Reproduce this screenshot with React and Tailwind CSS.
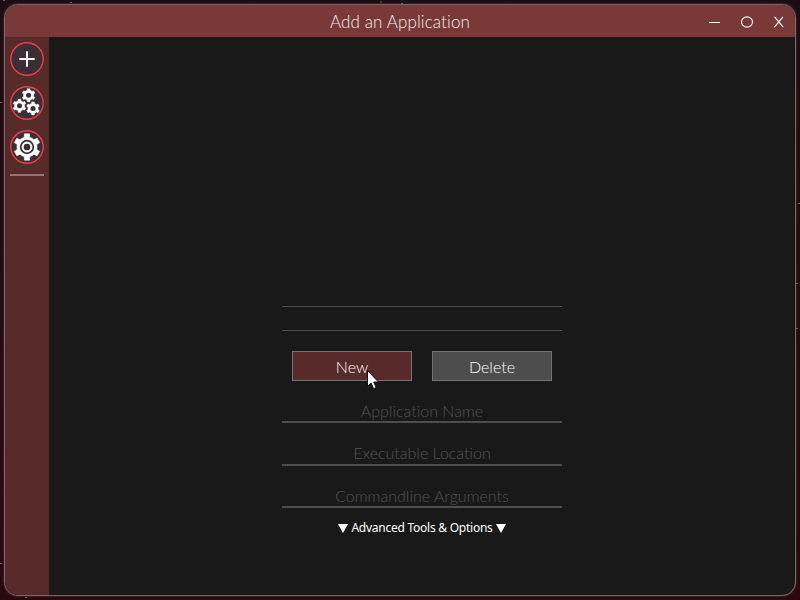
const LATO = "font-['Lato',sans-serif] font-light whitespace-nowrap [font-variant-ligatures:none]";

// Builds a closed outline with flat teeth around a centre point.
function gearPath(cx, cy, outer, inner, teeth) {
  const step = (Math.PI * 2) / teeth;
  const profile = [
    [-0.27, inner],
    [-0.18, outer],
    [0.18, outer],
    [0.27, inner],
    [0.5, inner],
  ];
  const points = [];
  for (let i = 0; i < teeth; i += 1) {
    for (const [offset, r] of profile) {
      const a = -Math.PI / 2 + (i + offset) * step;
      points.push(`${(cx + r * Math.cos(a)).toFixed(2)} ${(cy + r * Math.sin(a)).toFixed(2)}`);
    }
  }
  return `M${points.join("L")}Z`;
}

function Gear({ cx, cy, outer, inner, hole, teeth }) {
  return (
    <>
      <path d={gearPath(cx, cy, outer, inner, teeth)} fill="#fff" stroke="#fff" strokeWidth="0.6" strokeLinejoin="round" />
      <circle cx={cx} cy={cy} r={hole} fill="#3d2e35" />
    </>
  );
}

function RoundButton({ label, children }) {
  return (
    <button aria-label={label} className="size-[34px]">
      <svg viewBox="0 0 34 34" className="block size-[34px]">
        <circle cx="17" cy="17" r="16.2" fill="#3d2e35" stroke="#e84545" strokeWidth="1.4" />
        {children}
      </svg>
    </button>
  );
}

function Field({ label, className }) {
  return (
    <div className={`flex w-[280px] items-end justify-center border-b-2 border-[#4d4d4d] ${className}`}>
      <span className={`${LATO} text-[16px] leading-5 text-[#545454]`}>{label}</span>
    </div>
  );
}

export default function App() {
  return (
    <div className="relative h-[600px] w-[800px] overflow-hidden bg-[#260a0e] bg-linear-to-b from-[#1c0d10] to-[#2b080d] p-1">
      <svg className="absolute inset-0 h-full w-full" viewBox="0 0 800 600">
        <g fill="#7d565b">
          <rect x="3" y="0" width="2" height="1" />
          <rect x="70" y="2" width="2" height="1" />
          <rect x="380" y="1.5" width="2" height="1" />
          <rect x="401" y="3" width="2" height="1" />
          <rect x="798" y="203" width="2" height="1" />
          <rect x="796" y="283" width="2" height="1" />
          <rect x="796" y="328" width="2" height="1" />
          <rect x="0" y="102" width="2" height="1" />
          <rect x="0" y="563" width="2" height="1" />
          <rect x="25" y="597" width="2" height="1" />
        </g>
      </svg>
      <div className="relative flex h-[592px] w-[792px] flex-col overflow-hidden rounded-[14px] border border-[#75686a] bg-[#191919] shadow-[0_0_2px_#66565a]">
        <header className="flex h-8 shrink-0 items-center bg-[#793939] text-[#f3eeee]">
          <div className="w-[100px]" />
          <h1 className={`${LATO} flex-1 pt-0.5 text-center text-[17px] leading-6 tracking-[0.12px]`}>Add an Application</h1>
          <div className="flex w-[100px] items-center">
            <button aria-label="Minimize" className="ml-[14px] mt-[3px] h-px w-[11px] bg-white" />
            <button aria-label="Maximize" className="ml-[21px] mt-px h-3 w-[13px]">
              <svg viewBox="0 0 13 12" className="block h-3 w-[13px]">
                <ellipse cx="6" cy="6" rx="5.5" ry="5.1" fill="none" stroke="#fff" strokeWidth="1.1" />
              </svg>
            </button>
            <button aria-label="Close" className="ml-[19px] mt-px h-3 w-[11px]">
              <svg viewBox="0 0 11 12" className="block h-3 w-[11px]">
                <path d="M1.6 .8L10.2 11.2M10 .8L1.4 11.2" fill="none" stroke="#fff" strokeWidth="1.1" />
              </svg>
            </button>
          </div>
        </header>
        <div className="flex min-h-0 flex-1">
          <aside className="flex w-11 shrink-0 flex-col items-center gap-2.5 bg-[#582a2a] pt-[5px]">
            <RoundButton label="Add application">
              <path d="M17 9.3V24.7M9.3 17H24.7" stroke="#f4f4f4" strokeWidth="2" fill="none" />
            </RoundButton>
            <RoundButton label="Tools">
              <Gear cx={18.6} cy={9.2} outer={6.6} inner={5} hole={2.5} teeth={6} />
              <Gear cx={9.5} cy={19.8} outer={6.6} inner={5} hole={2.5} teeth={6} />
              <Gear cx={23} cy={22.4} outer={6.6} inner={5} hole={2.5} teeth={6} />
            </RoundButton>
            <RoundButton label="Settings">
              <Gear cx={17} cy={17} outer={13.4} inner={10} hole={7.2} teeth={6} />
              <circle cx="17" cy="17" r="4.4" fill="none" stroke="#fff" strokeWidth="2.1" />
            </RoundButton>
            <div className="h-0.5 w-[34px] bg-[#8f7777]" />
          </aside>
          <main className="flex flex-1 flex-col items-center pt-[269px]">
            <div className="h-[25px] w-[280px] shrink-0 border-y border-[#4d4d4d]" />
            <div className="relative mt-5 flex gap-5">
              <button className={`${LATO} h-[30px] w-[120px] border border-[#737373] bg-[#582a2a] pt-0.5 text-[16px] leading-[26px] text-white`}>New</button>
              <button className={`${LATO} h-[30px] w-[120px] border border-[#737373] bg-[#4d4d4d] pt-0.5 text-[16px] leading-[26px] text-white`}>Delete</button>
              <svg viewBox="0 0 12 20" className="absolute left-[75px] top-[19px] h-5 w-3">
                <path d="M.5.5V16.4L4.1 13L6.6 18.7L9.2 17.5L6.7 12H11.5Z" fill="#fff" stroke="#111" strokeWidth="1" />
              </svg>
            </div>
            <Field label="Application Name" className="mt-[21px] h-[21px]" />
            <Field label="Executable Location" className="mt-[21px] h-[22px] pb-px" />
            <Field label="Commandline Arguments" className="mt-5 h-[22px]" />
            <button className="mt-2.5 flex h-5 items-center gap-[3px] whitespace-nowrap font-['Noto_Sans',sans-serif] text-[12px] leading-5 tracking-[-0.25px] text-white">
              <svg viewBox="0 0 10 9" className="h-[9px] w-2.5"><path d="M0 0H10L5 9Z" fill="#fff" /></svg>
              <span>Advanced Tools &amp; Options</span>
              <svg viewBox="0 0 10 9" className="h-[9px] w-2.5"><path d="M0 0H10L5 9Z" fill="#fff" /></svg>
            </button>
          </main>
        </div>
      </div>
    </div>
  );
}
